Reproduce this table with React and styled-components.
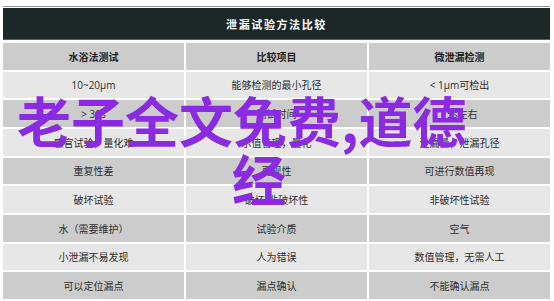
import React from "react";
import styled, { createGlobalStyle } from "styled-components";

const Global = createGlobalStyle`
  html, body { margin: 0; padding: 0; background: #ffffff; }
  body { font-family: "Open Sans", "Noto Sans CJK SC", sans-serif; }
`;

const Page = styled.div`
  position: relative;
  width: 554px;
  height: 301px;
  box-sizing: border-box;
  padding: 6px 4px 0 3px;
  overflow: hidden;
`;

const TitleRule = styled.div`
  height: 1px;
  background: #8e8e8e;
  margin-bottom: 1px;
`;

const TitleBar = styled.div`
  height: 31px;
  background: #1c2828;
  border-bottom: 1px solid #56605f;
  display: flex;
  align-items: center;
  justify-content: center;
  color: #ffffff;
  font-family: "Noto Sans CJK SC", sans-serif;
  font-weight: 700;
  font-size: 11px;
  letter-spacing: 1.6px;
  margin-bottom: 3px;
`;

const Grid = styled.div`
  display: grid;
  grid-template-columns: repeat(3, 1fr);
  grid-template-rows: repeat(9, 1fr);
  gap: 2px;
  height: 256px;
`;

const Cell = styled.div`
  display: flex;
  align-items: center;
  justify-content: center;
  background: ${(p) => (p.$shade ? "#cbcccb" : "#e6e7e6")};
  color: ${(p) => (p.$head ? "#1e1e1e" : "#2e2e2e")};
  font-family: "Open Sans", "Noto Sans CJK SC", sans-serif;
  font-size: 10px;
  font-weight: ${(p) => (p.$head ? 700 : 400)};
  white-space: nowrap;
`;

const Watermark = styled.div`
  position: absolute;
  left: 0;
  top: 91px;
  width: 554px;
  color: #8a2be2;
  font-family: "Noto Sans CJK SC", sans-serif;
  font-weight: 700;
  font-size: 54px;
  line-height: 58px;
  pointer-events: none;
`;

const WLine = styled.div`
  padding-left: ${(p) => p.$indent}px;
  white-space: nowrap;
`;

const rows = [
  ["水浴法测试", "比较项目", "微泄漏检测"],
  ["10~20μm", "能够检测的最小孔径", "< 1μm可检出"],
  ["> 30s", "测试时间", "15s左右"],
  ["感官试验，量化难", "示值管理，量化", "泄漏量，泄漏孔径"],
  ["重复性差", "再现性", "可进行数值再现"],
  ["破坏试验", "破坏/非破坏性", "非破坏性试验"],
  ["水（需要维护）", "试验介质", "空气"],
  ["小泄漏不易发现", "人为错误", "数值管理，无需人工"],
  ["可以定位漏点", "漏点确认", "不能确认漏点"],
];

export default function App() {
  return (
    <>
      <Global />
      <Page>
        <TitleRule />
        <TitleBar>泄漏试验方法比较</TitleBar>
        <Grid>
          {rows.map((r, i) =>
            r.map((t, j) => (
              <Cell key={`${i}-${j}`} $shade={i % 2 === 0} $head={i === 0}>
                {t}
              </Cell>
            ))
          )}
        </Grid>
        <Watermark>
          <WLine $indent={17}>老子全文免费,道德</WLine>
          <WLine $indent={232}>经</WLine>
        </Watermark>
      </Page>
    </>
  );
}
